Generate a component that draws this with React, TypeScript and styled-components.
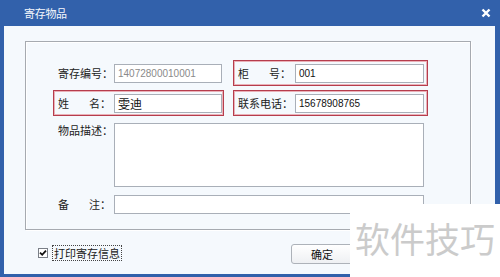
import React from 'react'
import styled, {createGlobalStyle} from 'styled-components'

const GlobalStyle = createGlobalStyle`
	html, body {
		margin: 0;
		padding: 0;
		width: 500px;
		height: 277px;
		overflow: hidden;
	}
	body {
		font-family: "Noto Sans CJK SC", "Liberation Sans", sans-serif;
		font-size: 11px;
		color: #1a1a1a;
	}
`

type FieldProps = {
	label: string,
	spread?: boolean,
	highlight?: boolean,
	labelWidth: number,
	children: React.ReactNode,
	className?: string
}

const Field: React.FC<FieldProps> = (props) => {
	const chars = props.label.split('')
	return (
		<FieldBox className={props.className} $highlight={props.highlight}>
			<Label style={{width: props.labelWidth}}>
				{props.spread ? (
					<Spread>
						<span>{chars[0]}</span>
						<span>{chars[1]}</span>
					</Spread>
				) : props.label}
				<span>：</span>
			</Label>
			{props.children}
		</FieldBox>
	)
}

export default function App() {
	return (
		<Window>
			<GlobalStyle />
			<TitleBar>
				<Title>寄存物品</Title>
				<CloseIcon viewBox="0 0 10 10">
					<path d="M1.5 1.5 L8.5 8.5 M8.5 1.5 L1.5 8.5" />
				</CloseIcon>
			</TitleBar>
			<Body>
				<GroupBox>
					<Field label="寄存编号" labelWidth={57}>
						<Input $muted>14072800010001</Input>
					</Field>
					<RightField label="柜号" spread highlight labelWidth={58}>
						<Input>001</Input>
					</RightField>
					<Field label="姓名" spread highlight labelWidth={57}>
						<Input $cjk>雯迪</Input>
					</Field>
					<RightField label="联系电话" highlight labelWidth={58}>
						<Input>15678908765</Input>
					</RightField>
					<WideField label="物品描述" labelWidth={57}>
						<TextArea />
					</WideField>
					<NoteField label="备注" spread labelWidth={57}>
						<Input />
					</NoteField>
				</GroupBox>
				<Footer>
					<CheckRow>
						<CheckBox>
							<svg viewBox="0 0 8 8" width="8" height="8">
								<path d="M1 3.6 L3.2 5.8 L7 1.6" fill="none" stroke="#111" strokeWidth="1.8" />
							</svg>
						</CheckBox>
						<CheckLabel>打印寄存信息</CheckLabel>
					</CheckRow>
					<Button>确定</Button>
				</Footer>
			</Body>
			<Watermark>软件技巧</Watermark>
		</Window>
	)
}

const Window = styled.div`
	position: relative;
	width: 500px;
	height: 277px;
	box-sizing: border-box;
	background: #3261ab;
	padding: 0 5px 3px 4px;
	display: flex;
	flex-direction: column;
`
const TitleBar = styled.div`
	height: 26px;
	display: flex;
	align-items: center;
	justify-content: space-between;
	padding: 0 9px 0 24px;
	margin: 0 -5px 0 -4px;
	color: #fff;
`
const Title = styled.div`
	font-size: 11px;
	letter-spacing: -0.3px;
	color: #f4f7fc;
`
const CloseIcon = styled.svg`
	width: 10px;
	height: 10px;
	stroke: #fff;
	stroke-width: 2.4;
	fill: none;
`
const Body = styled.div`
	flex: 1;
	background: #f5f9fd;
	padding: 15px 24px 0 21px;
	display: flex;
	flex-direction: column;
`
const GroupBox = styled.div`
	border: 1px solid #a6aab0;
	box-shadow: inset 1px 1px 0 #fff, 1px 1px 0 #fff;
	height: 189px;
	box-sizing: border-box;
	padding: 18px 0 0 27px;
	display: grid;
	grid-template-columns: 171px 195px;
	grid-auto-rows: min-content;
	column-gap: 9px;
	row-gap: 4px;
`
const FieldBox = styled.div<{$highlight?: boolean}>`
	display: flex;
	align-items: center;
	height: 26px;
	box-sizing: border-box;
	padding: 0 1px 0 3px;
	border: 1px solid ${p => p.$highlight ? '#b63d4d' : 'transparent'};
	box-shadow: ${p => p.$highlight ? 'inset 0 0 0 1px #eab1b8' : 'none'};
`
const RightField = styled(Field)`
	padding: 0 3px 0 3px;
`
const WideField = styled(Field)`
	grid-column: 1 / -1;
	height: auto;
	align-items: flex-start;
	padding: 2px 3px 2px 3px;
`
const NoteField = styled(Field)`
	grid-column: 1 / -1;
	height: 22px;
	margin-top: -1px;
	padding: 0 3px 0 3px;
`
const Label = styled.div`
	flex: none;
	display: flex;
	align-items: center;
	line-height: 14px;
	color: #222;
	padding-left: 1px;
	box-sizing: border-box;
`
const Spread = styled.span`
	display: flex;
	justify-content: space-between;
	width: 42px;
`
const Input = styled.div<{$muted?: boolean, $cjk?: boolean}>`
	flex: 1;
	height: 19px;
	box-sizing: border-box;
	border: 1px solid #a9afb8;
	background: #fff;
	padding: 0 3px;
	display: flex;
	align-items: center;
	font-family: ${p => p.$cjk ? '"Noto Sans CJK SC", sans-serif' : '"Liberation Sans", Arial, sans-serif'};
	font-size: ${p => p.$cjk ? '12px' : '10px'};
	color: ${p => p.$muted ? '#8a8a8a' : '#111'};
`
const TextArea = styled.div`
	flex: 1;
	height: 64px;
	box-sizing: border-box;
	border: 1px solid #a9afb8;
	background: #fff;
`
const Footer = styled.div`
	flex: 1;
	display: flex;
	align-items: center;
	justify-content: space-between;
	padding: 0 118px 0 13px;
`
const CheckRow = styled.div`
	display: flex;
	align-items: center;
	gap: 5px;
	margin-top: 1px;
`
const CheckBox = styled.span`
	width: 10px;
	height: 10px;
	box-sizing: border-box;
	border: 1px solid #7a7f87;
	background: #fff;
	display: flex;
	align-items: center;
	justify-content: center;
`
const CheckLabel = styled.span`
	font-size: 11px;
	line-height: 14px;
	padding: 0 1px;
	outline: 1px dotted #444;
	outline-offset: 0;
`
const Button = styled.button`
	width: 62px;
	height: 20px;
	margin-top: 3px;
	border: 1px solid #adb2b9;
	border-radius: 3px;
	background: linear-gradient(#ffffff, #eef0f3);
	font-family: "Noto Sans CJK SC", sans-serif;
	font-size: 11px;
	color: #111;
	padding: 0;
`
const Watermark = styled.div`
	position: absolute;
	left: 350px;
	top: 204px;
	right: 0;
	bottom: 0;
	background: #fff;
	padding: 16px 0 0 5px;
	font-family: "Noto Sans CJK SC", sans-serif;
	font-size: 35px;
	line-height: 36px;
	color: #cbcbcb;
	white-space: nowrap;
	overflow: hidden;
`
